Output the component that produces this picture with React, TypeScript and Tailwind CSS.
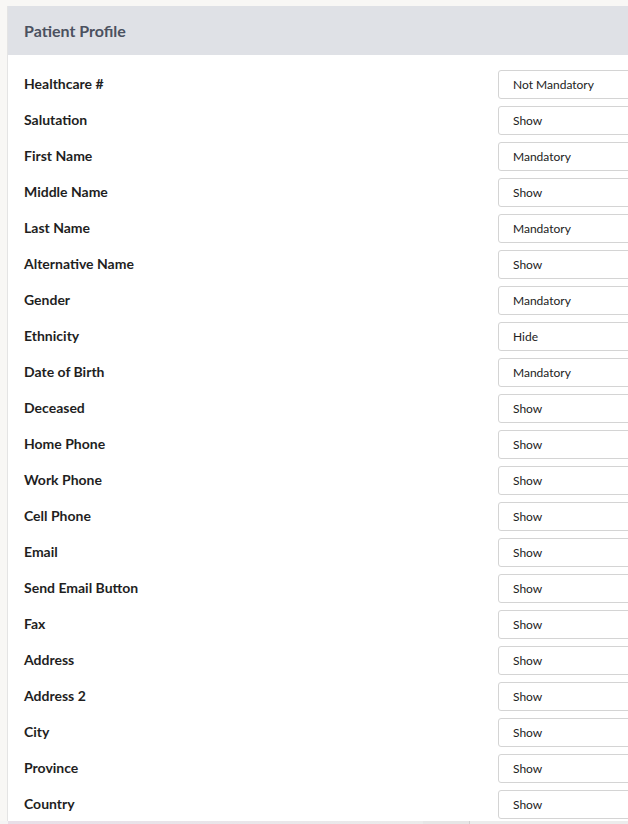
const rows: [string, string][] = [
  ["Healthcare #", "Not Mandatory"],
  ["Salutation", "Show"],
  ["First Name", "Mandatory"],
  ["Middle Name", "Show"],
  ["Last Name", "Mandatory"],
  ["Alternative Name", "Show"],
  ["Gender", "Mandatory"],
  ["Ethnicity", "Hide"],
  ["Date of Birth", "Mandatory"],
  ["Deceased", "Show"],
  ["Home Phone", "Show"],
  ["Work Phone", "Show"],
  ["Cell Phone", "Show"],
  ["Email", "Show"],
  ["Send Email Button", "Show"],
  ["Fax", "Show"],
  ["Address", "Show"],
  ["Address 2", "Show"],
  ["City", "Show"],
  ["Province", "Show"],
  ["Country", "Show"],
];

export default function App() {
  return (
    <div className="w-[628px] h-[824px] overflow-hidden bg-[#f8f7f5] font-['Lato','Liberation_Sans',sans-serif] flex flex-col">
      <div className="pl-[7px] pt-[6px] flex-1 min-h-0">
        <div className="bg-white border-l border-[#e4e4e4] h-full flex flex-col">
          <div className="h-[49px] bg-[#dfe1e6] px-[16px] flex items-center">
            <h2 className="text-[16px] font-bold text-[#4b5160]">Patient Profile</h2>
          </div>
          <div className="pt-[15px] pl-[16px] flex flex-col gap-[7px]">
            {rows.map(([label, value]) => (
              <div key={label} className="flex items-center h-[29px]">
                <div className="w-[474px] shrink-0 mb-[2px] text-[14px] font-bold text-[#1f1f1f]">{label}</div>
                <div className="w-[200px] shrink-0 h-[29px] border border-[#d4d4d4] rounded-[3px] bg-white flex items-center pl-[14px] text-[12px] text-[#222]">
                  {value}
                </div>
              </div>
            ))}
          </div>
        </div>
      </div>
      <div className="h-[3px] flex">
        <div className="w-[8px] bg-[#f4f4f4]" />
        <div className="w-[415px] bg-gradient-to-r from-[#e8dfe8] to-[#ebebeb]" />
        <div className="w-[47px] bg-[#e6e6e6] border-r border-[#d0d0d0]" />
        <div className="flex-1 bg-[#ececec]" />
      </div>
    </div>
  );
}
